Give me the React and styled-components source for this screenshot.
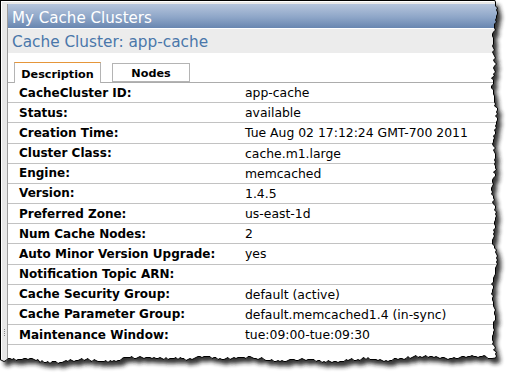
import React from 'react';
import styled, { createGlobalStyle } from 'styled-components';

const GlobalStyle = createGlobalStyle`
  html, body {
    margin: 0;
    padding: 0;
    background: #fff;
  }
  body {
    font-family: "DejaVu Sans", Verdana, sans-serif;
  }
`;

const Page = styled.div`
  position: relative;
  width: 515px;
  height: 382px;
  overflow: hidden;
  background: #fff;
`;

const Frame = styled.div`
  box-sizing: border-box;
  width: 515px;
  height: 382px;
  border-top: 1px solid #000;
  border-left: 1px solid #000;
  padding: 1px 0 0 1px;
  background: #fff;
  display: flex;
`;

const Shell = styled.div`
  flex: 1;
  display: flex;
  padding-top: 2px;
  background: #e8e8e8;
`;

const Side = styled.div`
  width: 5px;
  flex-shrink: 0;
  display: flex;
  flex-direction: column;
  align-items: center;
  gap: 1px;
  padding-top: 325px;
`;

const GripDot = styled.span`
  width: 1px;
  height: 1px;
  background: #8a8a8a;
`;

const Panel = styled.div`
  flex: 1;
  display: flex;
  flex-direction: column;
  border-left: 1px solid #9c9c9c;
  background: #fff;
`;

const Header = styled.div`
  box-sizing: border-box;
  height: 25px;
  padding: 3px 0 0 4px;
  display: flex;
  align-items: center;
  border-bottom: 1px solid #fff;
  background: linear-gradient(#b6c5dc, #8ea6c8 55%, #6886b0);
  color: #fff;
  font-size: 15.1px;
`;

const SubHeader = styled.div`
  box-sizing: border-box;
  height: 24px;
  padding: 1px 0 0 4px;
  display: flex;
  align-items: center;
  background: #ececec;
  color: #4a77aa;
  font-size: 15.3px;
`;

const TabBar = styled.div`
  display: flex;
  align-items: flex-end;
  gap: 11px;
  padding: 9px 0 0 6px;
  border-bottom: 1px solid #acacac;
`;

const Tab = styled.div`
  box-sizing: border-box;
  width: ${(p) => p.$w}px;
  height: ${(p) => (p.$active ? 21 : 19)}px;
  margin-bottom: ${(p) => (p.$active ? -1 : 0)}px;
  padding-top: 2px;
  display: flex;
  align-items: center;
  justify-content: center;
  border: 1px solid #b4b4b4;
  border-bottom: ${(p) => (p.$active ? 'none' : '1px solid #b4b4b4')};
  border-top-color: ${(p) => (p.$active ? '#e5963a' : '#b4b4b4')};
  background: #fff;
  position: relative;
  font-size: 11.2px;
  font-weight: bold;
  color: #000;
`;

const Rows = styled.div`
  display: flex;
  flex-direction: column;
`;

const Row = styled.div`
  box-sizing: border-box;
  height: 20.18px;
  display: grid;
  grid-template-columns: 237px 1fr;
  align-items: center;
  border-bottom: 1px solid #c2c2c2;
  color: #000;
  white-space: nowrap;
`;

const Label = styled.div`
  padding-left: 11px;
  font-size: 12px;
  font-weight: bold;
`;

const Value = styled.div`
  font-size: 12.4px;
`;

const Tear = styled.svg`
  position: absolute;
  left: 0;
  top: 0;
  pointer-events: none;
`;

const rows = [
  ['CacheCluster ID:', 'app-cache'],
  ['Status:', 'available'],
  ['Creation Time:', 'Tue Aug 02 17:12:24 GMT-700 2011'],
  ['Cluster Class:', 'cache.m1.large'],
  ['Engine:', 'memcached'],
  ['Version:', '1.4.5'],
  ['Preferred Zone:', 'us-east-1d'],
  ['Num Cache Nodes:', '2'],
  ['Auto Minor Version Upgrade:', 'yes'],
  ['Notification Topic ARN:', ''],
  ['Cache Security Group:', 'default (active)'],
  ['Cache Parameter Group:', 'default.memcached1.4 (in-sync)'],
  ['Maintenance Window:', 'tue:09:00-tue:09:30'],
];

// jagged torn-paper outline along the right and bottom edges
const edgePoints = () => {
  let s = 11;
  const rnd = () => {
    s = (s * 16807) % 2147483647;
    return s / 2147483647 - 0.5;
  };
  const pts = [];
  for (let y = 0; y <= 358; y += 2) {
    const x = 494 + 1.6 * Math.sin(y / 8) + 1.1 * Math.sin(y / 19 + 1) + rnd() * 2.8;
    pts.push([Math.round(x) + 0.5, y]);
  }
  for (let x = 492; x >= 0; x -= 2) {
    const y =
      358.5 +
      2 * Math.sin(x / 41) +
      1.3 * Math.sin(x / 9 + 2) +
      rnd() * 2.4 +
      4 * Math.exp(-((x - 188) ** 2) / 60);
    pts.push([x, Math.round(y) + 0.5]);
  }
  return pts;
};

const TornEdge = () => {
  const pts = edgePoints();
  const line = pts.map((p) => p.join(',')).join(' ');
  const paper = `M0,0 L${line} L0,${pts[pts.length - 1][1]} Z`;
  const outside = `M0,0 H515 V382 H0 Z ${paper}`;
  return (
    <Tear width="515" height="382" viewBox="0 0 515 382">
      <defs>
        <filter id="blur" x="-10%" y="-10%" width="120%" height="120%">
          <feGaussianBlur stdDeviation="2" />
        </filter>
        <clipPath id="out">
          <path d={outside} clipRule="evenodd" />
        </clipPath>
      </defs>
      <path d={outside} fill="#fff" fillRule="evenodd" />
      <g clipPath="url(#out)">
        <path d={paper} transform="translate(4 5)" fill="#1e1e1e" opacity="0.9" filter="url(#blur)" />
      </g>
      <polyline points={line} fill="none" stroke="#000" strokeWidth="1" />
    </Tear>
  );
};

const App = () => (
  <Page>
    <GlobalStyle />
    <Frame>
      <Shell>
        <Side>
          <GripDot />
          <GripDot />
          <GripDot />
          <GripDot />
        </Side>
        <Panel>
          <Header>My Cache Clusters</Header>
          <SubHeader>Cache Cluster: app-cache</SubHeader>
          <TabBar>
            <Tab $active $w={87}>Description</Tab>
            <Tab $w={78}>Nodes</Tab>
          </TabBar>
          <Rows>
            {rows.map(([label, value]) => (
              <Row key={label}>
                <Label>{label}</Label>
                <Value>{value}</Value>
              </Row>
            ))}
          </Rows>
        </Panel>
      </Shell>
    </Frame>
    <TornEdge />
  </Page>
);

export default App;
